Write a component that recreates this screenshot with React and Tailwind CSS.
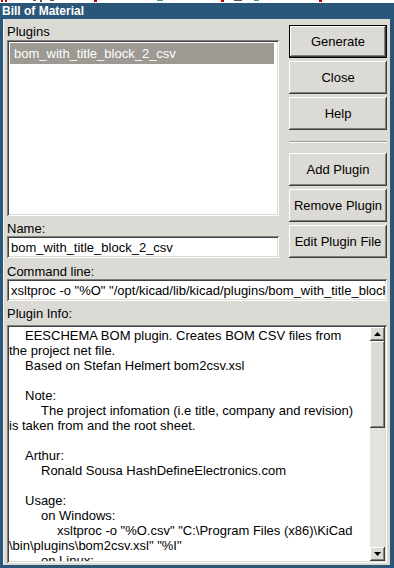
import React from "react";

const raised =
  "shadow-[inset_-1px_-1px_0_#404040,inset_1px_1px_0_#ffffff,inset_-2px_-2px_0_#808080,inset_2px_2px_0_#dcdad5]";
const sunken =
  "shadow-[inset_1px_1px_0_#808080,inset_-1px_-1px_0_#ffffff,inset_2px_2px_0_#404040,inset_-2px_-2px_0_#dcdad5]";

const info = [
  "\tEESCHEMA BOM plugin. Creates BOM CSV files from",
  "the project net file.",
  "\tBased on Stefan Helmert bom2csv.xsl",
  "",
  "\tNote:",
  "\t\tThe project infomation (i.e title, company and revision)",
  "is taken from and the root sheet.",
  "",
  "\tArthur:",
  "\t\tRonald Sousa HashDefineElectronics.com",
  "",
  "\tUsage:",
  "\t\ton Windows:",
  "\t\t\txsltproc -o \"%O.csv\" \"C:\\Program Files (x86)\\KiCad",
  "\\bin\\plugins\\bom2csv.xsl\" \"%I\"",
  "\t\ton Linux:",
];

const Btn = ({ children, isDefault }) => (
  <button
    className={`flex h-[33px] w-full items-center justify-center bg-[#dcdad5] text-[13px] leading-[15px] text-black ${raised} ${
      isDefault ? "border border-black" : ""
    }`}
  >
    {children}
  </button>
);

const Arrow = ({ down }) => (
  <svg width="7" height="4" viewBox="0 0 7 4">
    <polygon points={down ? "0,0 7,0 3.5,4" : "3.5,0 7,4 0,4"} fill="#000" />
  </svg>
);

export default function App() {
  return (
    <div className="h-[568px] w-[394px] overflow-hidden bg-[#2a5679] font-['Liberation_Sans',Arial,sans-serif] text-black">
      {/* window behind, cut off at the top edge */}
      <div className="flex h-[3px] items-start bg-white">
        <div className="ml-[1px] h-[2px] w-[2px] bg-[#c00000]" />
        <div className="ml-[2px] h-[2px] w-[2px] bg-[#c00000]" />
        <div className="ml-[26px] h-[1px] w-[3px] bg-[#555]" />
        <div className="ml-[4px] h-[2px] w-[2px] bg-[#555]" />
        <div className="ml-[8px] h-[1px] w-[4px] bg-[#555]" />
        <div className="ml-[40px] h-[2px] w-[3px] bg-[#c00000]" />
        <div className="ml-[60px] h-[1px] w-[6px] bg-[#3a9a9a]" />
        <div className="ml-[58px] h-[2px] w-[3px] bg-[#c00000]" />
        <div className="ml-[10px] h-[1px] w-[8px] bg-[#555]" />
        <div className="ml-[12px] h-[1px] w-[5px] bg-[#3a9a9a]" />
        <div className="ml-[60px] h-[2px] w-[3px] bg-[#c00000]" />
      </div>

      {/* title bar */}
      <div className="h-[16px] px-[2px] text-[12px] font-bold leading-[16px] text-white">
        Bill of Material
      </div>

      {/* dialog body */}
      <div className="ml-[3px] mr-[4px] flex h-[546px] flex-col bg-[#dcdad5] pb-[2px] pl-[4px] pr-[3px] pt-[5px] text-[13px] leading-[15px] shadow-[inset_1px_0_0_#f2f1ee]">
        <div className="flex gap-[10px]">
          {/* left column */}
          <div className="flex w-[272px] flex-col">
            <div className="h-[16px]">Plugins</div>
            <div className={`h-[176px] bg-white p-[3px] pr-[5px] ${sunken}`}>
              <div className="flex h-[21px] items-center bg-[#9c9a93] pl-[4px] text-white">
                bom_with_title_block_2_csv
              </div>
            </div>
            <div className="mt-[5px] h-[15px]">Name:</div>
            <div className={`flex h-[22px] items-center bg-white pl-[4px] ${sunken}`}>
              bom_with_title_block_2_csv
            </div>
          </div>

          {/* right column */}
          <div className="mt-[1px] flex w-[98px] flex-col">
            <div className="flex flex-col gap-[3px]">
              <Btn isDefault>Generate</Btn>
              <Btn>Close</Btn>
              <Btn>Help</Btn>
            </div>
            <div className="mb-[10px] mt-[11px] h-[2px] border-b border-t border-b-white border-t-[#9a9893]" />
            <div className="flex flex-col gap-[3px]">
              <Btn>Add Plugin</Btn>
              <Btn>Remove Plugin</Btn>
              <Btn>Edit Plugin File</Btn>
            </div>
          </div>
        </div>

        <div className="mt-[6px] h-[15px]">Command line:</div>
        <div className={`flex h-[22px] items-center overflow-hidden whitespace-nowrap bg-white pl-[4px] pr-[2px] ${sunken}`}>
          <div className="overflow-hidden">
            xsltproc -o "%O" "/opt/kicad/lib/kicad/plugins/bom_with_title_block_2_csv.xsl" "%I"
          </div>
        </div>

        <div className="mt-[5px] h-[15px]">Plugin Info:</div>
        <div className={`mt-[4px] flex h-[238px] bg-white p-[2px] ${sunken}`}>
          <div className="flex-1 overflow-hidden pt-[1px] [tab-size:16px]">
            {info.map((line, i) => (
              <div key={i} className="h-[15px] whitespace-pre">
                {line || "\u00a0"}
              </div>
            ))}
          </div>
          {/* scrollbar */}
          <div className="flex w-[15px] flex-col bg-[#dcdad5]">
            <div className={`flex h-[14px] items-center justify-center ${raised}`}>
              <Arrow />
            </div>
            <div className={`h-[87px] ${raised}`} />
            <div className="flex-1 bg-[#e4e2de]" />
            <div className={`flex h-[14px] items-center justify-center ${raised}`}>
              <Arrow down />
            </div>
          </div>
        </div>
      </div>
    </div>
  );
}
